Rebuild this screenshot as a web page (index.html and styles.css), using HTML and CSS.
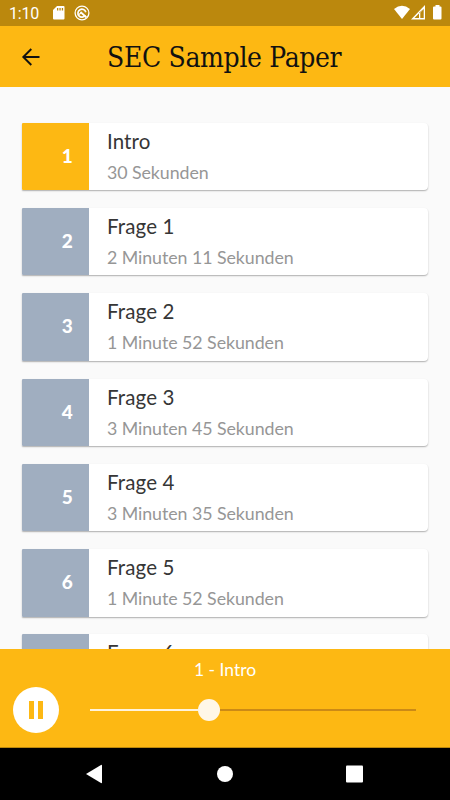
FILE: index.html
```html
<!DOCTYPE html>
<html lang="de">
<head>
<meta charset="utf-8">
<title>SEC Sample Paper</title>
<link rel="stylesheet" href="styles.css">
</head>
<body>
<div class="app">
  <div class="status">
    <span class="clock">1:10</span>
    <svg class="sd" width="12" height="14" viewBox="0 0 12 14"><path fill="#fff" fill-rule="evenodd" d="M4 0H10.500Q11.500 0 11.500 1V12.500Q11.500 13.500 10.500 13.500H1Q0 13.500 0 12.500V4ZM4 2V4.500H5.300V2ZM6.400 2V4.500H7.700V2ZM8.800 2V4.500H10.100V2Z"/></svg>
    <svg class="sync" width="16" height="16" viewBox="0 0 16 16" fill="none" stroke="#fff"><circle cx="8" cy="8" r="6.900" stroke-width="1.300"/><path stroke-width="1.700" d="M11.300 10.300A4 4 0 1 1 11.800 7.200"/><path stroke-width="1.700" d="M6.500 7L12.500 12.500"/><path stroke-width="1.200" d="M5 9.500L7.500 7.500"/></svg>
    <svg class="signals" width="50" height="16" viewBox="0 0 50 16"><path fill="#fff" d="M0 4Q8 -2.500 16 4L8 14Z"/><path fill="#fff" fill-rule="evenodd" d="M31 0V14.500H17ZM29.700 3.500L20.500 13.100H25V7.800L29.700 3.500ZM26.300 7.500V13.100H29.700V4Z"/><path fill="#fff" d="M41.500 0H45.500V1.500H46.500Q47.500 1.500 47.500 2.500V13.500Q47.500 14.500 46.500 14.500H40Q39 14.500 39 13.500V2.500Q39 1.500 40 1.500H41.500Z"/></svg>
  </div>
  <header class="bar">
    <svg class="back" width="20" height="20" viewBox="0 0 20 20" fill="none" stroke="#111" stroke-width="1.900"><path d="M18.500 10H2.500M10.300 2L2.300 10L10.300 18"/></svg>
    <h1>SEC Sample Paper</h1>
  </header>
  <main class="list">
    <article class="card active"><div class="num">1</div><div class="info"><h2>Intro</h2><p>30 Sekunden</p></div></article>
    <article class="card"><div class="num">2</div><div class="info"><h2>Frage 1</h2><p>2 Minuten 11 Sekunden</p></div></article>
    <article class="card"><div class="num">3</div><div class="info"><h2>Frage 2</h2><p>1 Minute 52 Sekunden</p></div></article>
    <article class="card"><div class="num">4</div><div class="info"><h2>Frage 3</h2><p>3 Minuten 45 Sekunden</p></div></article>
    <article class="card"><div class="num">5</div><div class="info"><h2>Frage 4</h2><p>3 Minuten 35 Sekunden</p></div></article>
    <article class="card"><div class="num">6</div><div class="info"><h2>Frage 5</h2><p>1 Minute 52 Sekunden</p></div></article>
    <article class="card"><div class="num"></div><div class="info"><h2>Frage 6</h2></div></article>
  </main>
  <section class="player">
    <div class="track-name">1 - Intro</div>
    <div class="controls">
      <div class="pause"><i></i><i></i></div>
      <div class="slider"><div class="done"></div><div class="thumb"></div><div class="rest"></div></div>
    </div>
  </section>
  <nav class="nav">
    <svg width="18" height="20" viewBox="0 0 18 20"><path fill="#fff" d="M0 10L15 1Q16 .500 16 1.500V18.500Q16 19.500 15 19Z"/></svg>
    <svg width="18" height="20" viewBox="0 0 18 20"><circle fill="#fff" cx="9" cy="10" r="8"/></svg>
    <svg width="18" height="20" viewBox="0 0 18 20"><rect fill="#fff" x="0" y="1.500" width="17" height="17" rx="1"/></svg>
  </nav>
</div>
</body>
</html>
```
FILE: styles.css
```css
* { box-sizing: border-box; margin: 0; padding: 0; }
body { font-family: Lato, "Liberation Sans", sans-serif; background: #fafafa; }
.app { width: 450px; height: 800px; display: flex; flex-direction: column; overflow: hidden; }
.app svg { display: block; flex: none; }
.status { height: 26px; flex: none; background: #bb880d; display: flex; align-items: center; padding: 0 6px 0 9px; }
.clock { width: 44px; font: 16px/26px Roboto, sans-serif; color: #fff; letter-spacing: -0.2px; padding-top: 2px; }
.sync { margin-left: 9px; }
.signals { margin-left: auto; }
.bar { height: 61px; flex: none; background: #fdb813; display: flex; align-items: center; padding-left: 21px; }
.bar h1 { margin-left: 66px; font: 400 28px/40px "DejaVu Serif Condensed", "DejaVu Serif", serif; font-stretch: condensed; color: #111; white-space: nowrap; letter-spacing: -.35px; padding-top: 2px; }
.list { flex: 1; min-height: 0; overflow: hidden; padding: 35.700px 22px 0; display: flex; flex-direction: column; gap: 17.8px; }
.card { height: 67.500px; flex: none; display: flex; background: #fff; border-radius: 1px 4px 4px 1px; box-shadow: 0 1px 1.500px rgba(0,0,0,.3); }
.num { width: 67.400px; background: #a0aec0; color: #fff; font-weight: 900; font-size: 19px; line-height: 66px; text-align: right; padding-right: 16.500px; border-radius: 1px 0 0 1px; }
.active .num { background: #fdb813; }
.info { padding: 5px 0 0 17.500px; white-space: nowrap; }
.info h2 { font-weight: 400; font-size: 20.500px; line-height: 27px; color: #363636; letter-spacing: .15px; }
.info p { font-size: 17.800px; line-height: 24px; margin-top: 5px; color: #969696; letter-spacing: -.05px; }
.player { height: 99px; flex: none; background: #fdb813; border-bottom: 1px solid #bb880d; }
.track-name { color: #fff; text-align: center; font-size: 17.500px; line-height: 24px; padding-top: 9px; height: 37.500px; }
.controls { display: flex; align-items: center; height: 46px; padding-left: 13px; }
.pause { width: 46px; height: 46px; border-radius: 50%; background: #fff; display: flex; justify-content: center; align-items: center; gap: 4px; }
.pause i { width: 5px; height: 18px; background: #fdb813; }
.slider { display: flex; align-items: center; width: 326px; margin-left: 31px; }
.done { width: 108px; height: 2px; background: #fff3dc; }
.thumb { width: 22px; height: 22px; border-radius: 50%; background: #fff7e8; }
.rest { flex: 1; height: 2px; background: #cb8a16; }
.nav { height: 52px; flex: none; background: #000; display: flex; justify-content: center; gap: 112px; align-items: center; }
```
